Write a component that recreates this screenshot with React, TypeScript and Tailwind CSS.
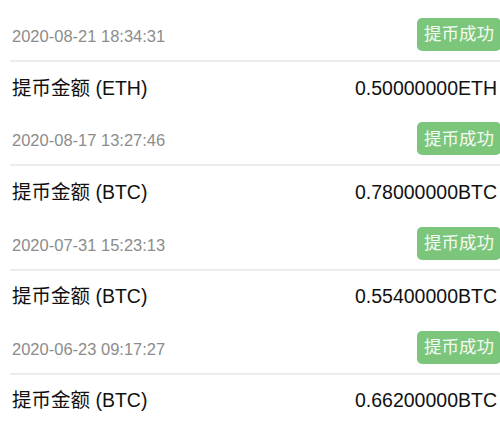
import React from 'react';

interface Record {
  time: string;
  coin: string;
  amount: string;
}

const records: Record[] = [
  { time: '2020-08-21 18:34:31', coin: 'ETH', amount: '0.50000000' },
  { time: '2020-08-17 13:27:46', coin: 'BTC', amount: '0.78000000' },
  { time: '2020-07-31 15:23:13', coin: 'BTC', amount: '0.55400000' },
  { time: '2020-06-23 09:17:27', coin: 'BTC', amount: '0.66200000' },
];

const font = { fontFamily: '"Liberation Sans", "Noto Sans CJK SC", sans-serif' };

export default function App() {
  return (
    <div className="w-[500px] h-[431px] overflow-hidden bg-white" style={font}>
      <div className="w-[504px] pt-[13px] pl-[10px]">
        {records.map((r) => (
          <div key={r.time}>
            <div className="h-[49px] flex justify-between pl-[2px] border-b-2 border-[#ececec]">
              <span className="self-center text-[16.5px] text-[#8c8c8c]">{r.time}</span>
              <span className="mt-[5px] mr-[3px] h-[33px] flex items-center px-[7px] rounded-[5px] bg-[#7cc67c] text-[17.5px] text-[#f4fbf4]">
                提币成功
              </span>
            </div>
            <div className="h-[55.3px] flex items-center justify-between pl-[2px] pr-[7px] pb-[3px]">
              <span className="text-[19.5px] text-[#111]">提币金额 ({r.coin})</span>
              <span className="text-[19.5px] text-[#111]">
                {r.amount}
                {r.coin}
              </span>
            </div>
          </div>
        ))}
      </div>
    </div>
  );
}
